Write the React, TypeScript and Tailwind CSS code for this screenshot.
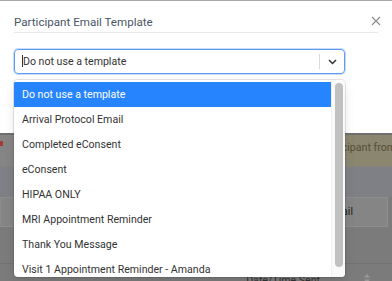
import React from "react";

const options = [
  "Do not use a template",
  "Arrival Protocol Email",
  "Completed eConsent",
  "eConsent",
  "HIPAA ONLY",
  "MRI Appointment Reminder",
  "Thank You Message",
  "Visit 1 Appointment Reminder - Amanda",
];

export default function App() {
  return (
    <div
      className="relative w-[392px] h-[281px] overflow-hidden bg-[#7b7b7b]"
      style={{ fontFamily: 'Roboto, "Liberation Sans", Arial, sans-serif' }}
    >
      {/* Modal */}
      <div className="h-[133px] bg-white border-t border-[#a9a9a9] flex flex-col">
        <div className="flex items-start pl-[14px] pr-[11px] pt-[14px]">
          <div className="flex-1 mr-[3px]">
            <div className="text-[11.6px] leading-[15px] text-[#4a5565] pb-[2px] border-b border-[#e8e9eb]">
              Participant Email Template
            </div>
          </div>
          <svg width="10" height="10" viewBox="0 0 10 10" className="mt-[1px] ml-[-10px]">
            <path d="M1 1L9 9M9 1L1 9" stroke="#8a8a8a" strokeWidth="1.1" />
          </svg>
        </div>
        <div className="pl-[14px] pr-[47px] pt-[16px]">
          <div className="h-[25px] rounded-[4px] border border-[#5b9cf0] shadow-[0_0_0_1px_rgba(91,156,240,0.35)] flex items-center">
            <div className="flex-1 flex items-center pl-[7px]">
              <div className="w-px h-[12px] bg-[#333]" />
              <span className="text-[10.6px] text-[#333]">Do not use a template</span>
            </div>
            <div className="w-px h-[15px] bg-[#d9d9d9]" />
            <div className="w-[24px] flex justify-center">
              <svg width="9" height="6" viewBox="0 0 9 6">
                <path d="M1 1L4.5 4.5L8 1" stroke="#333" strokeWidth="1.5" fill="none" />
              </svg>
            </div>
          </div>
        </div>
      </div>

      {/* Page behind overlay */}
      <div className="flex flex-col">
        <div className="h-[2px] bg-[#6f6f6f]" />
        <div className="h-[31px] flex">
          <div className="w-[14px] bg-[#858585] relative">
            <div className="absolute left-0 top-[6px] w-[3px] h-[5px] bg-[#a83a32]" />
          </div>
          <div className="flex-1 bg-[#8a8670] flex items-start pt-[5px] justify-end overflow-hidden">
            <span className="text-[10.6px] text-[#574e33] whitespace-nowrap mr-[-4px]">participant from</span>
          </div>
        </div>
        <div className="h-[1px] bg-[#85837a]" />
        <div className="h-[30px] bg-[#7e8085]" />
        <div className="h-[30px] flex pr-[4px]">
          <div className="flex-1 bg-[#858585] border border-[#8d8d8d] flex items-center justify-end pr-[34px]">
            <span className="text-[10.6px] text-[#222]">Email</span>
          </div>
        </div>
        <div className="h-[36px] bg-[#7b7b7b]" />
        <div className="h-[1px] bg-[#727272]" />
        <div className="h-[20px] flex items-start">
          <div className="flex-1 flex justify-end pt-[12px] pr-[42px]">
            <span className="text-[10.6px] leading-[10px] text-[#333]">Date/Time Sent</span>
          </div>
          <div className="w-[30px] pt-[9px] pl-[1px] flex">
            <svg width="8" height="11" viewBox="0 0 8 11">
              <path d="M4 1L7 4.5H1Z" fill="#999" />
              <path d="M4 10L7 6.5H1Z" fill="#999" />
            </svg>
          </div>
        </div>
      </div>

      {/* Dropdown menu */}
      <div className="absolute left-[14px] top-[80px] w-[331px] h-[197px] bg-white rounded-[4px] shadow-[0_0_0_1px_rgba(0,0,0,0.1),0_4px_11px_rgba(0,0,0,0.1)] overflow-hidden flex">
        <div className="flex-1 pt-[2px] flex flex-col">
          {options.map((o, i) => (
            <div
              key={o}
              className={
                "h-[25px] shrink-0 flex items-center pl-[8px] text-[10.6px] whitespace-nowrap " +
                (i === 0 ? "bg-[#2684ff] text-white" : "text-[#333]")
              }
            >
              {o}
            </div>
          ))}
        </div>
        <div className="w-[14px] pt-[3px] pl-[3px] pr-[2px] bg-[#fafafa] border-l border-[#f0f0f0]">
          <div className="h-[184px] rounded-full bg-[#c1c1c1]" />
        </div>
      </div>
    </div>
  );
}
